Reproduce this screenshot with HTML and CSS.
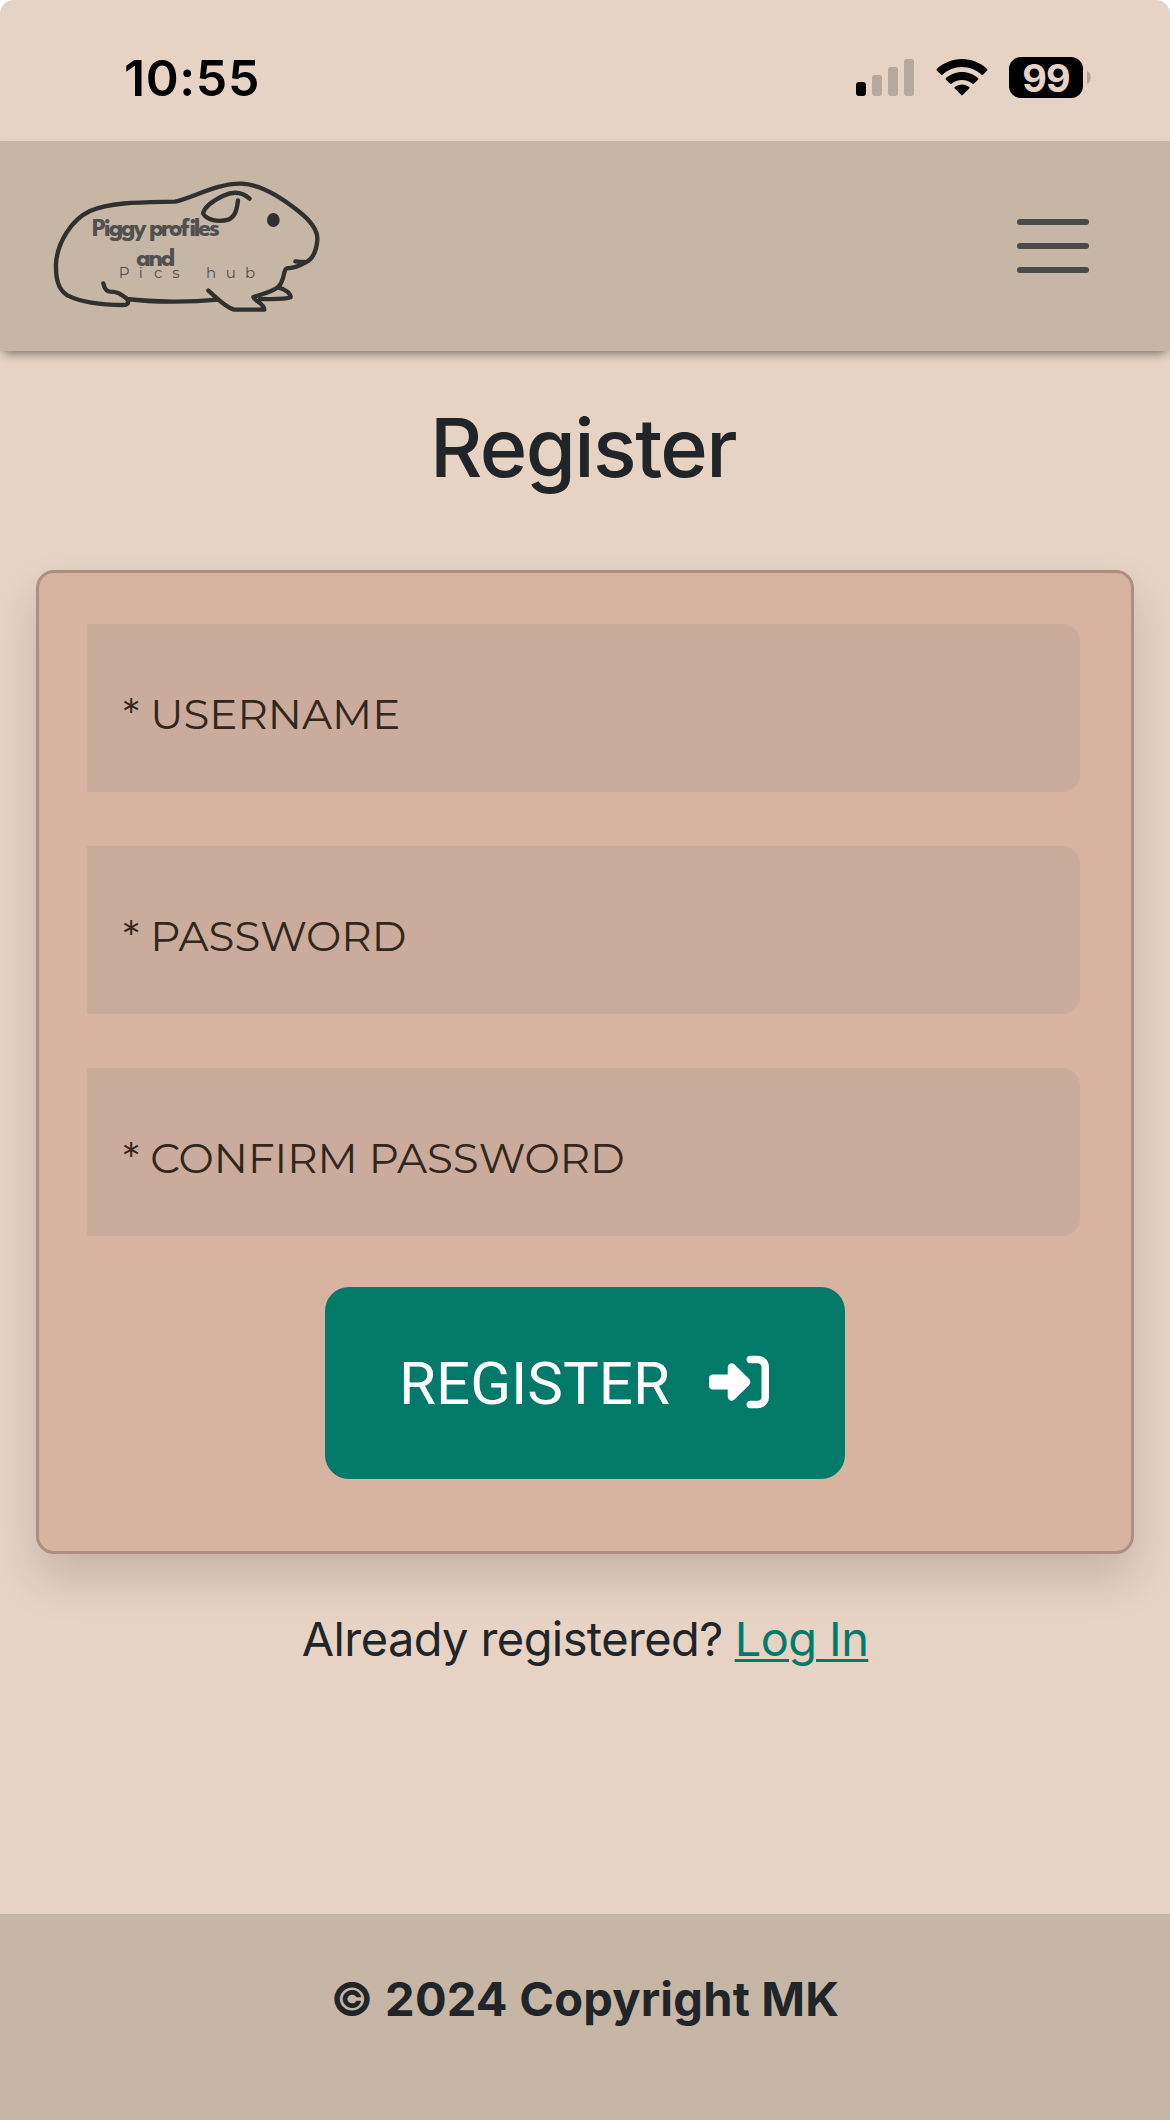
FILE: index.html
```html
<!DOCTYPE html>
<html lang="en">
<head>
<meta charset="utf-8">
<title>Register</title>
<link rel="stylesheet" href="styles.css">
</head>
<body>
<div class="screen">
  <div class="status">
    <span class="time">10:55</span>
    <div class="indicators">
      <svg class="signal" width="58" height="38" viewBox="0 0 58 38">
        <rect x="0" y="24" width="10" height="14" rx="3"/>
        <g opacity=".2"><rect x="16" y="17" width="10" height="21" rx="3"/><rect x="32" y="9" width="10" height="29" rx="3"/><rect x="48" y="1" width="10" height="37" rx="3"/></g>
      </svg>
      <svg class="wifi" width="52" height="38" viewBox="0 0 52 38">
        <path d="M26 1C16.300 1 7.300 4.800 .8 11.100a1 1 0 0 0 0 1.400L5 16.700a1 1 0 0 0 1.400 0C11.600 11.900 18.500 9 26 9s14.400 2.900 19.600 7.700a1 1 0 0 0 1.400 0l4.200-4.200a1 1 0 0 0 0-1.400C44.700 4.800 35.700 1 26 1z"/>
        <path d="M26 14c-6.200 0-11.900 2.400-16.200 6.200a1 1 0 0 0 0 1.400l4.200 4.200a1 1 0 0 0 1.400 0C18.200 23.400 21.900 22 26 22s7.800 1.400 10.600 3.800a1 1 0 0 0 1.400 0l4.200-4.200a1 1 0 0 0 0-1.400C37.900 16.400 32.200 14 26 14z"/>
        <path d="M26 26.500c-2.700 0-5.200.9-7.200 2.400a1 1 0 0 0-.1 1.500l6.600 6.700a1 1 0 0 0 1.400 0l6.600-6.700a1 1 0 0 0-.1-1.500c-2-1.500-4.500-2.400-7.200-2.400z"/>
      </svg>
      <span class="battery">99</span>
      <svg class="nub" width="4" height="13" viewBox="0 0 4 13"><path d="M0 0c5 2 5 11 0 13z"/></svg>
    </div>
  </div>

  <header class="navbar">
    <svg class="logo" width="300" height="165" viewBox="0 0 900 495">
      <g class="logo-lines">
        <path d="M262 404C268 414 262 420 250 420C190 420 125 412 82 391C53 372 47 340 48 295C52 235 92 165 150 138C215 110 310 112 405 110C455 100 535 53 605 56C665 58 725 98 775 138C808 164 834 195 832 225C829 260 815 285 795 293C780 302 760 310 740 310C728 316 737 340 715 366C690 384 660 389 640 396C642 408 672 414 673 434H582C555 426 530 398 505 377"/>
        <path d="M190 355C193 370 200 379 210 380C235 380 245 390 262 402C340 412 450 412 533 404"/>
        <path d="M766 289C780 291 788 291 795 291M715 367C740 374 752 387 752 397C735 404 700 402 660 402"/>
        <path d="M629 101C608 82 580 78 550 92C525 104 494 124 489 145C500 166 535 172 565 164C587 155 591 130 594 106"/>
      </g>
      <ellipse cx="700" cy="165" rx="19" ry="21" fill="#303030"/>
      <g class="logo-name">
        <text x="156" y="212" textLength="384" lengthAdjust="spacing">Piggy profiles</text>
        <text x="289" y="304" textLength="116" lengthAdjust="spacing">and</text>
      </g>
      <text class="logo-sub" y="339" x="236 296 342 397 498 498 557 615">Pics hub</text>
    </svg>
    <button class="menu" aria-label="Menu"><span></span><span></span><span></span></button>
  </header>

  <main>
    <h1>Register</h1>
    <form class="card">
      <div class="field">* USERNAME</div>
      <div class="field">* PASSWORD</div>
      <div class="field">* CONFIRM PASSWORD</div>
      <button class="submit" type="button">
        <span>REGISTER</span>
        <svg width="60" height="60" viewBox="0 0 512 512"><path fill="#fff" d="M217.900 105.900L340.700 228.700c7.200 7.200 11.300 17.100 11.300 27.300s-4.100 20.100-11.300 27.300L217.900 406.100c-6.400 6.400-15 9.900-24 9.900c-18.700 0-33.900-15.200-33.900-33.900V320H32c-17.700 0-32-14.300-32-32v-64c0-17.700 14.300-32 32-32h128v-62.100c0-18.700 15.200-33.900 33.900-33.900c9 0 17.600 3.600 24 9.900zM352 416h64c17.700 0 32-14.300 32-32V128c0-17.700-14.300-32-32-32h-64c-17.700 0-32-14.300-32-32s14.300-32 32-32h64c53 0 96 43 96 96v256c0 53-43 96-96 96h-64c-17.700 0-32-14.300-32-32s14.300-32 32-32z"/></svg>
      </button>
    </form>
    <p class="already"><span>Already registered?</span><a href="#">Log In</a></p>
  </main>

  <footer><strong>© 2024 Copyright MK</strong></footer>
</div>
</body>
</html>
```
FILE: styles.css
```css
* { box-sizing: border-box; }
body { margin: 0; background: #fff; font-family: Inter, "Liberation Sans", sans-serif; color: #212529; }
.screen { width: 1170px; height: 2120px; display: flex; flex-direction: column; background: #e6d3c4; border-radius: 14px 14px 0 0; overflow: hidden; }

.status { height: 141px; flex: none; display: flex; justify-content: space-between; padding: 48px 79px 0 124px; color: #000; }
.time { font-size: 50px; font-weight: 600; line-height: 60px; letter-spacing: 0.6px; }
.indicators { display: flex; align-items: flex-start; }
.signal { margin: 10px 22px 0 0; }
.wifi { margin: 10px 21px 0 0; }
.battery { width: 74px; height: 41px; margin-top: 9px; border-radius: 12px; background: #000; color: #e6d3c4; font-size: 38px; font-weight: 700; line-height: 42px; text-align: center; letter-spacing: -1px; }
.nub { margin: 23px 0 0 4px; fill: #b2a398; }

.navbar { height: 210px; flex: none; display: flex; justify-content: space-between; align-items: flex-start; padding: 24px 81px 0 40px; background: #c6b6a6; box-shadow: 0 6px 10px -4px rgba(0, 0, 0, .5); }
.logo-lines { fill: none; stroke: #303030; stroke-width: 13; stroke-linecap: round; stroke-linejoin: round; }
.logo-name { font: 700 77px "League Spartan", Montserrat, sans-serif; fill: #505050; }
.logo-sub { font: 400 45px Montserrat, "Noto Sans", sans-serif; fill: #505050; }
.menu { display: flex; flex-direction: column; gap: 18px; margin-top: 54px; padding: 0; border: 0; background: none; }
.menu span { width: 72px; height: 6px; border-radius: 3px; background: #4a4a48; }

main { flex: 1; display: flex; flex-direction: column; }
h1 { height: 219px; margin: 0; padding: 48px 4px 0 0; font-size: 81px; font-weight: 500; line-height: 98px; text-align: center; letter-spacing: -1.6px; }
.card { height: 984px; margin: 0 36px; padding: 51px 51px 0 48px; display: flex; flex-direction: column; border: 3px solid #ae9080; border-radius: 18px; background: #d7b3a0; box-shadow: 0 24px 48px rgba(0, 0, 0, .15); }
.field { height: 168px; margin-bottom: 54px; padding: 12px 0 0 36px; display: flex; align-items: center; border-radius: 0 18px 18px 0; background: #cbab9b; color: #33261a; font-family: Montserrat, Inter, sans-serif; font-size: 42px; font-weight: 400; }
.submit { align-self: center; width: 520px; height: 192px; margin: -3px 0 0 3px; padding: 0 2px 0 0; display: flex; align-items: center; justify-content: center; gap: 39px; border: 0; border-radius: 24px; background: #027a6a; color: #fff; font: 400 60px/72px Roboto, sans-serif; }
.submit span { padding-top: 1px; }
.submit svg { margin-bottom: 3px; }
.already { display: flex; justify-content: center; gap: 12px; margin: 56px 0 0; font-size: 47px; line-height: 58px; letter-spacing: -0.6px; }
.already a { color: #027a6a; text-decoration-thickness: 3px; text-underline-offset: 3px; }
footer { height: 206px; flex: none; padding-top: 56px; text-align: center; background: #c6b6a6; font-size: 47px; line-height: 58px; letter-spacing: 0.2px; }
```
